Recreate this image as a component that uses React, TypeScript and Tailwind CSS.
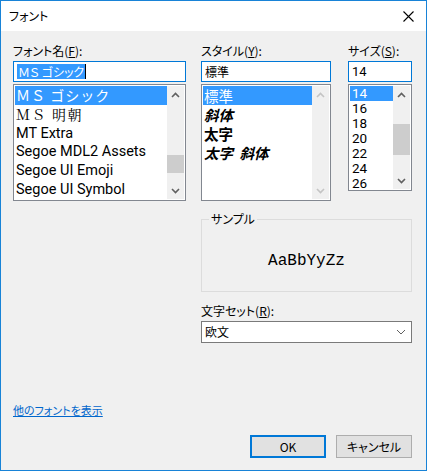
import type { ReactNode } from "react";

const jp = "font-['Yu_Gothic_UI','Noto_Sans_CJK_JP',sans-serif] [font-feature-settings:'palt']";

function Chevron({ up, light }: { up?: boolean; light?: boolean }) {
  return (
    <svg width="9" height="6" viewBox="0 0 9 6" className={up ? "" : "rotate-180"}>
      <path d="M1 5 L4.5 1.5 L8 5" fill="none" stroke={light ? "#c4c4c4" : "#606060"} strokeWidth="1.6" />
    </svg>
  );
}

function ScrollBar({ thumbTop, thumbH, disabled }: { thumbTop?: number; thumbH?: number; disabled?: boolean }) {
  return (
    <div className="w-[17px] h-full bg-[#f0f0f0] flex flex-col shrink-0">
      <div className="h-[17px] flex items-center justify-center">
        <Chevron up light={disabled} />
      </div>
      <div className="flex-1">
        {thumbH ? <div className="bg-[#cdcdcd]" style={{ marginTop: thumbTop, height: thumbH }} /> : null}
      </div>
      <div className="h-[17px] flex items-center justify-center">
        <Chevron light={disabled} />
      </div>
    </div>
  );
}

function Label({ children }: { children: ReactNode }) {
  return <div className={`h-[16px] leading-[16px] text-[12px] text-black ${jp}`}>{children}</div>;
}

function Input({ children }: { children: ReactNode }) {
  return (
    <div className="mt-[2px] h-[21px] border border-[#0078d7] bg-white flex items-center pl-[3px]">
      {children}
    </div>
  );
}

export default function App() {
  const fonts = [
    { name: "ＭＳ ゴシック", cls: `${jp} text-[14px] tracking-[1px] [font-feature-settings:normal]`, sel: true },
    { name: "ＭＳ 明朝", cls: "font-['Noto_Serif_CJK_JP','Noto_Sans_CJK_JP',serif] text-[14px] tracking-[1.5px]" },
    { name: "MT Extra", cls: "font-['Roboto',sans-serif] text-[14.5px]" },
    { name: "Segoe MDL2 Assets", cls: "font-['Roboto',sans-serif] text-[14.5px]" },
    { name: "Segoe UI Emoji", cls: "font-['Roboto',sans-serif] text-[14.5px]" },
    { name: "Segoe UI Symbol", cls: "font-['Roboto',sans-serif] text-[14.5px]" },
  ];
  const styles = [
    { name: "標準", cls: "", sel: true },
    { name: "斜体", cls: "italic font-bold" },
    { name: "太字", cls: "font-bold" },
    { name: "太字 斜体", cls: "italic font-bold" },
  ];
  const sizes = ["14", "16", "18", "20", "22", "24", "26"];

  return (
    <div className="w-[427px] h-[471px] border border-[#1883d7] bg-[#f0f0f0] flex flex-col overflow-hidden">
      {/* Title bar */}
      <div className="h-[30px] bg-white flex items-center pl-[8px] pr-[12px] shrink-0">
        <span className={`text-[12px] text-black ${jp}`}>フォント</span>
        <svg className="ml-auto" width="11" height="11" viewBox="0 0 11 11">
          <path d="M0.5 0.5 L10.5 10.5 M10.5 0.5 L0.5 10.5" stroke="#000" strokeWidth="1.1" />
        </svg>
      </div>

      <div className="px-[12px] pt-[12px] flex flex-col">
        {/* Top row: font / style / size */}
        <div className="flex items-start">
          <div className="w-[173px]">
            <Label>
              フォント名(<span className="underline">F</span>):
            </Label>
            <Input>
              <span className={`bg-[#3399ff] text-white text-[12px] leading-[15px] px-[1px] ${jp}`}>
                ＭＳ ゴシック
              </span>
              <span className="w-px h-[15px] bg-black" />
            </Input>
            <div className="mt-[2px] h-[117px] border border-[#828790] bg-white p-[1px] flex">
              <div className="flex-1 flex flex-col">
                {fonts.map((f) => (
                  <div
                    key={f.name}
                    className={`h-[19.5px] leading-[19.5px] pl-[1px] whitespace-nowrap overflow-hidden ${f.cls} ${
                      f.sel ? "bg-[#3399ff] text-white" : "text-black"
                    }`}
                  >
                    {f.name}
                  </div>
                ))}
              </div>
              <ScrollBar thumbTop={52} thumbH={18} />
            </div>
          </div>

          <div className="w-[130px] ml-[15px]">
            <Label>
              スタイル(<span className="underline">Y</span>):
            </Label>
            <Input>
              <span className={`text-[12px] text-black ${jp}`}>標準</span>
            </Input>
            <div className="mt-[2px] h-[117px] border border-[#828790] bg-white p-[1px] flex">
              <div className="flex-1 flex flex-col">
                {styles.map((s) => (
                  <div
                    key={s.name}
                    className={`h-[19px] leading-[19px] pl-[1px] text-[14.5px] whitespace-pre ${jp} ${s.cls} ${
                      s.sel ? "bg-[#3399ff] text-white" : "text-black"
                    }`}
                  >
                    {s.name.replace(" ", "  ")}
                  </div>
                ))}
              </div>
              <ScrollBar disabled />
            </div>
          </div>

          <div className="w-[64px] ml-[17px]">
            <Label>
              サイズ(<span className="underline">S</span>):
            </Label>
            <Input>
              <span className="text-[13px] text-black font-['Roboto',sans-serif]">14</span>
            </Input>
            <div className="mt-[2px] h-[107px] border border-[#828790] bg-white p-[1px] flex">
              <div className="flex-1 flex flex-col">
                {sizes.map((s, i) => (
                  <div
                    key={s}
                    className={`h-[15px] leading-[15px] pl-[2px] text-[13.5px] font-['Roboto',sans-serif] ${
                      i === 0 ? "bg-[#3399ff] text-white" : "text-black"
                    }`}
                  >
                    {s}
                  </div>
                ))}
              </div>
              <ScrollBar thumbTop={21} thumbH={31} />
            </div>
          </div>
        </div>

        {/* Sample + charset */}
        <div className="ml-[188px] w-[211px] flex flex-col">
          <div className="relative mt-[18px] h-[73px] border border-[#dcdcdc] flex items-center justify-center">
            <span className={`absolute left-[7px] -top-[9px] px-[2px] bg-[#f0f0f0] text-[12px] leading-[16px] text-black ${jp}`}>
              サンプル
            </span>
            <span className="font-['Liberation_Mono',monospace] text-[16px] text-black pt-[10px]">AaBbYyZz</span>
          </div>
          <div className="mt-[11px]">
            <Label>
              文字セット(<span className="underline">R</span>):
            </Label>
          </div>
          <div className="mt-[2px] h-[22px] border border-[#7a7a7a] bg-white flex items-center pl-[3px] pr-[5px]">
            <span className={`text-[12px] text-black ${jp}`}>欧文</span>
            <svg className="ml-auto" width="10" height="6" viewBox="0 0 10 6">
              <path d="M1 1 L5 5 L9 1" fill="none" stroke="#606060" strokeWidth="1" />
            </svg>
          </div>
        </div>

        {/* Link */}
        <div className={`mt-[59px] h-[16px] leading-[16px] text-[11px] ${jp}`}>
          <span className="text-[#0066cc] underline">他のフォントを表示</span>
        </div>

        {/* Buttons */}
        <div className="mt-[17px] flex justify-end gap-[10px] pr-[2px]">
          <button className={`w-[76px] h-[23px] border-2 border-[#0078d7] bg-[#e1e1e1] text-[12px] text-black ${jp}`}>OK</button>
          <button className={`w-[76px] h-[23px] border border-[#adadad] bg-[#e1e1e1] text-[12px] text-black ${jp}`}>キャンセル</button>
        </div>
      </div>
    </div>
  );
}
